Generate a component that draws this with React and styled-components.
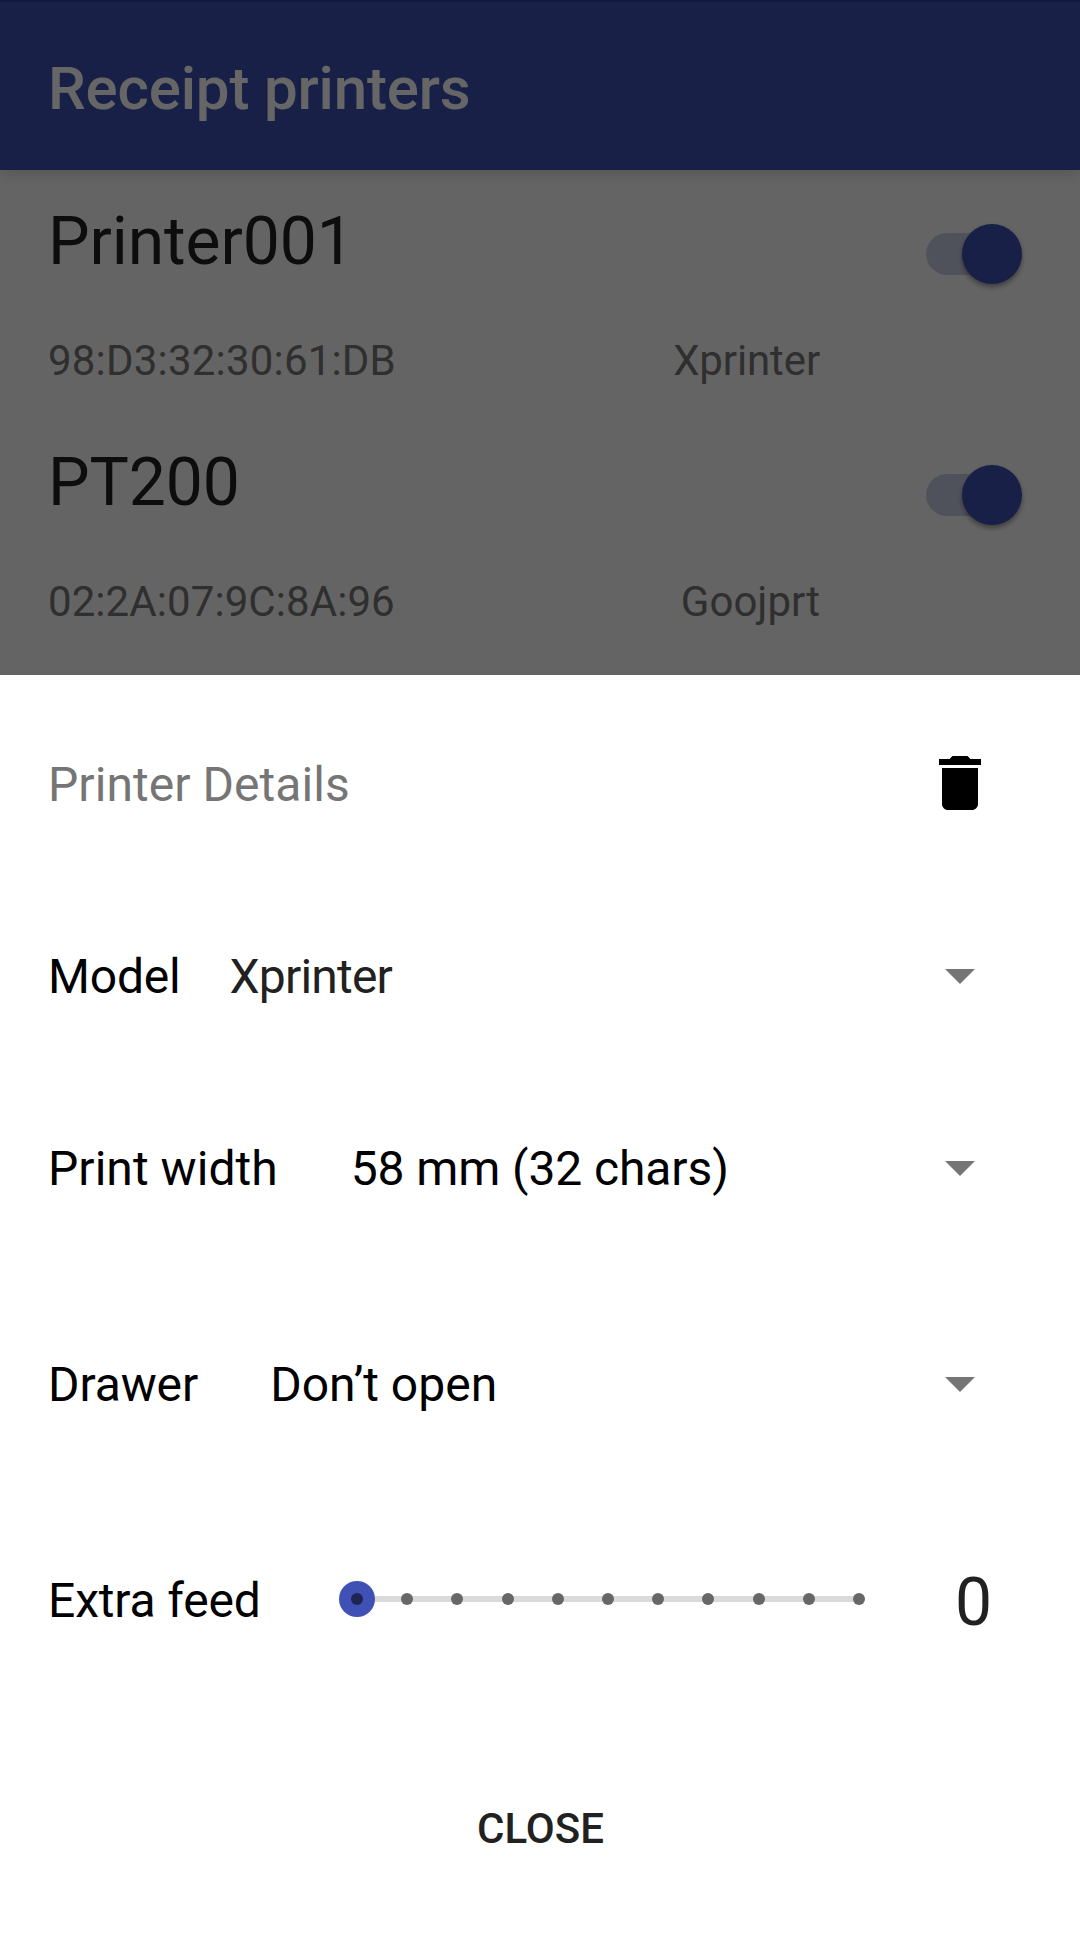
import React from 'react';
import styled, { createGlobalStyle } from 'styled-components';

const GlobalStyle = createGlobalStyle`
  * { box-sizing: border-box; }
  body {
    margin: 0;
    background: #fff;
    font-family: Roboto, 'Liberation Sans', sans-serif;
    overflow: hidden;
  }
`;

const Screen = styled.div`
  display: flex;
  flex-direction: column;
  width: 1080px;
  height: 1946px;
  overflow: hidden;
`;

const Backdrop = styled.div`
  position: relative;
  height: 675px;
  overflow: hidden;
  background: #fafafa;

  &::after {
    content: '';
    position: absolute;
    inset: 0;
    z-index: 2;
    background: rgba(0, 0, 0, 0.6);
  }
`;

const AppBar = styled.header`
  display: flex;
  align-items: center;
  height: 170px;
  padding: 6px 48px 0;
  border-top: 2px solid #303f9f;
  background: #3f51b5;
  box-shadow: 0 4px 12px rgba(0, 0, 0, 0.14);
`;

const AppTitle = styled.h1`
  margin: 0;
  color: #fff;
  font-size: 60px;
  font-weight: 500;
  line-height: 70px;
  letter-spacing: -0.16px;
`;

const PrinterItem = styled.article`
  display: flex;
  flex-direction: column;
  gap: 55px;
  height: 241px;
  padding: 33px 48px 0;
`;

const ItemTop = styled.div`
  display: flex;
  justify-content: space-between;
  height: 78px;
`;

const PrinterName = styled.h2`
  margin: 0;
  color: #212121;
  font-size: 66px;
  font-weight: 400;
  line-height: 78px;
  letter-spacing: -0.1px;
`;

const ItemMeta = styled.div`
  display: flex;
  justify-content: space-between;
  padding-right: 212px;
  color: #757575;
  font-size: 42px;
  line-height: 50px;
`;

const MetaText = styled.span`
  letter-spacing: ${(p) => p.$spacing || 0}px;
`;

const SwitchTrack = styled.span`
  display: flex;
  align-items: center;
  justify-content: flex-end;
  width: 96px;
  height: 42px;
  margin: 30px 10px 0 0;
  border-radius: 21px;
  background: linear-gradient(90deg, #c9cde4 0 66px, transparent 66px);
`;

const SwitchThumb = styled.span`
  flex: none;
  width: 60px;
  height: 60px;
  border-radius: 50%;
  background: #3f51b5;
  box-shadow: 0 3px 5px rgba(0, 0, 0, 0.38);
`;

const Sheet = styled.section`
  display: flex;
  flex-direction: column;
  flex: 1;
  background: #fff;
`;

const Row = styled.div`
  display: flex;
  align-items: center;
  height: ${(p) => p.$height || 216}px;
  padding: 0 84px 0 48px;
`;

const Text = styled.span`
  padding-top: 3px;
  color: ${(p) => p.$color || '#000'};
  font-size: 48px;
  line-height: 57px;
  letter-spacing: ${(p) => p.$spacing || 0}px;
  white-space: nowrap;
`;

const Select = styled.div`
  display: flex;
  align-items: center;
  justify-content: space-between;
  flex: 1;
  margin-left: ${(p) => p.$gap}px;
`;

const SheetTitle = styled(Text)`
  flex: 1;
`;

const Icon = styled.svg`
  display: block;
  width: 72px;
  height: 72px;
  fill: ${(p) => p.$color || '#000'};
`;

const Slider = styled.div`
  display: flex;
  align-items: center;
  justify-content: space-between;
  width: 538px;
  height: 36px;
  margin-left: auto;
  background: linear-gradient(#dadada, #dadada) 18px 15px / 502px 6px no-repeat;
`;

const Stop = styled.span`
  display: flex;
  align-items: center;
  justify-content: center;
  width: 36px;
  height: 36px;
  border-radius: 50%;
  background: ${(p) => (p.$active ? '#3f51b5' : 'transparent')};

  &::before {
    content: '';
    width: 12px;
    height: 12px;
    border-radius: 50%;
    background: ${(p) => (p.$active ? '#1d2553' : '#676767')};
  }
`;

const FeedValue = styled.output`
  width: 119px;
  padding: 8px 4px 0 0;
  text-align: right;
  color: #212121;
  font-size: 66px;
  line-height: 78px;
`;

const CloseButton = styled.button`
  flex: 1;
  padding: 5px 0 0 1px;
  border: 0;
  background: transparent;
  color: #212121;
  font: 500 42px/50px Roboto, 'Liberation Sans', sans-serif;
  text-transform: uppercase;
`;

const printers = [
  { name: 'Printer001', address: '98:D3:32:30:61:DB', spacing: 0.2, model: 'Xprinter', modelSpacing: -0.12 },
  { name: 'PT200', address: '02:2A:07:9C:8A:96', spacing: 0.08, model: 'Goojprt', modelSpacing: 0 },
];

const settings = [
  { label: 'Model', value: 'Xprinter', height: 168, gap: 49, color: '#212121', labelSpacing: -0.2, valueSpacing: -0.8 },
  { label: 'Print width', value: '58 mm (32 chars)', height: 216, gap: 73, labelSpacing: 0.04, valueSpacing: -0.1 },
  { label: 'Drawer', value: 'Don’t open', height: 216, gap: 72, labelSpacing: -0.1, valueSpacing: 0 },
];

const FEED_STEPS = 11;
const feed = 0;

export default function App() {
  return (
    <>
      <GlobalStyle />
      <Screen>
        <Backdrop>
          <AppBar>
            <AppTitle>Receipt printers</AppTitle>
          </AppBar>
          {printers.map((p) => (
            <PrinterItem key={p.name}>
              <ItemTop>
                <PrinterName>{p.name}</PrinterName>
                <SwitchTrack>
                  <SwitchThumb />
                </SwitchTrack>
              </ItemTop>
              <ItemMeta>
                <MetaText $spacing={p.spacing}>{p.address}</MetaText>
                <MetaText $spacing={p.modelSpacing}>{p.model}</MetaText>
              </ItemMeta>
            </PrinterItem>
          ))}
        </Backdrop>
        <Sheet>
          <Row>
            <SheetTitle $color="#757575" $spacing={0.06}>Printer Details</SheetTitle>
            <Icon viewBox="0 0 24 24">
              <path d="M6 19c0 1.1.9 2 2 2h8c1.1 0 2-.9 2-2V7H6v12zM19 4h-3.5l-1-1h-5l-1 1H5v2h14V4z" />
            </Icon>
          </Row>
          {settings.map((s) => (
            <Row key={s.label} $height={s.height}>
              <Text $spacing={s.labelSpacing}>{s.label}</Text>
              <Select $gap={s.gap}>
                <Text $color={s.color} $spacing={s.valueSpacing}>{s.value}</Text>
                <Icon viewBox="0 0 24 24" $color="#757575">
                  <path d="M7 10l5 5 5-5z" />
                </Icon>
              </Select>
            </Row>
          ))}
          <Row>
            <Text $spacing={-0.15}>Extra feed</Text>
            <Slider>
              {Array.from({ length: FEED_STEPS }, (_, i) => (
                <Stop key={i} $active={i === feed} />
              ))}
            </Slider>
            <FeedValue>{feed}</FeedValue>
          </Row>
          <CloseButton>Close</CloseButton>
        </Sheet>
      </Screen>
    </>
  );
}
